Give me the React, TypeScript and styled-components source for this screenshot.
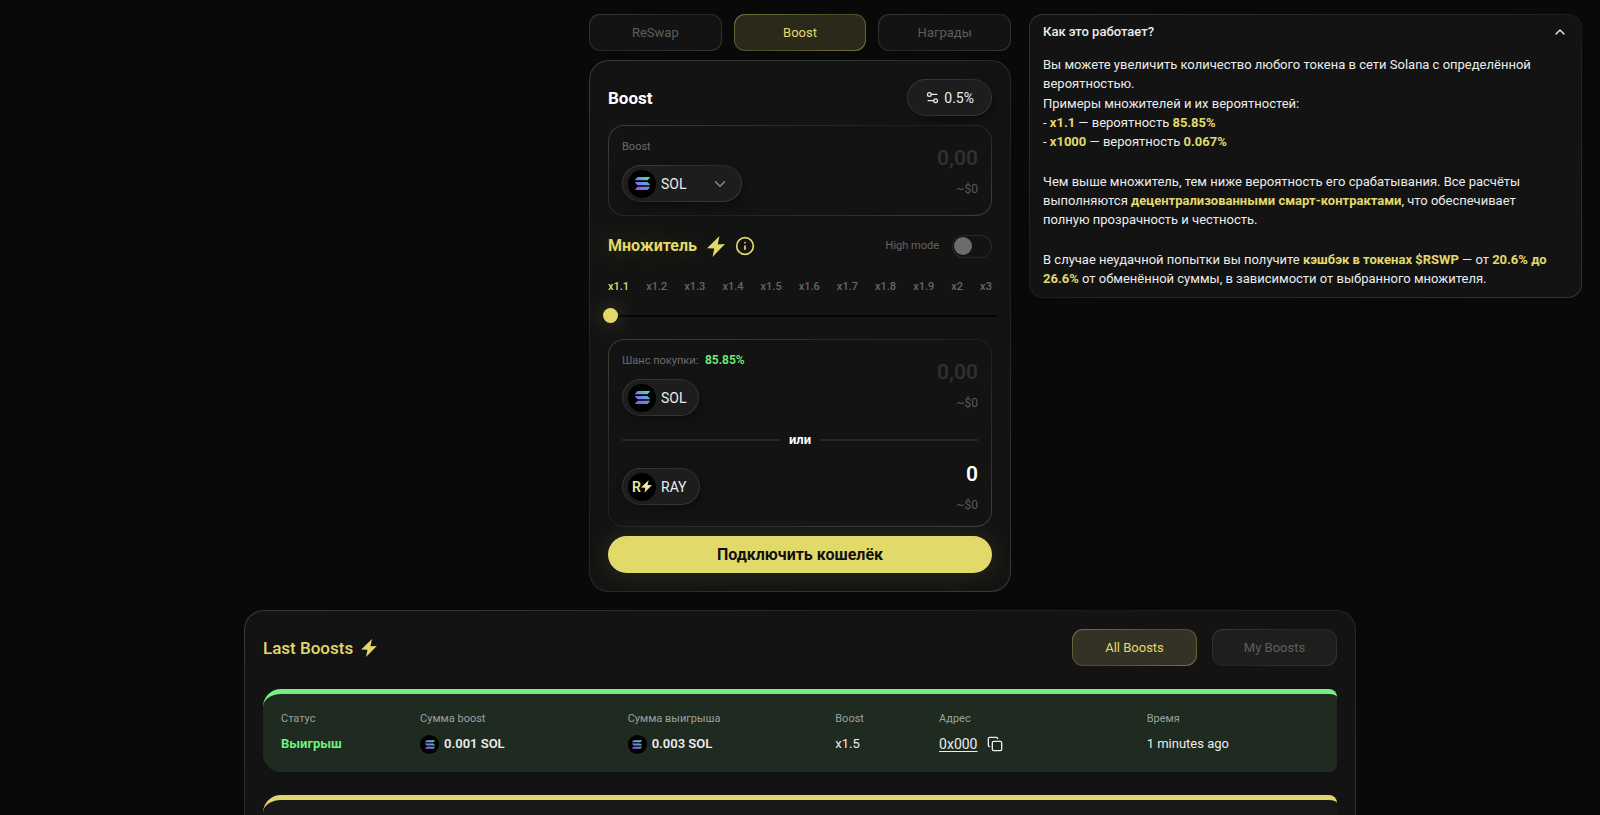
import React, { useId, useState } from "react";
import styled, { createGlobalStyle, css } from "styled-components";
import { ChevronDown, ChevronUp, Copy, Info, Settings2 } from "lucide-react";

const accent = "#e2d96b";
const green = "#6ff07c";

const GlobalStyle = createGlobalStyle`
  *, *::before, *::after { box-sizing: border-box; }
  body {
    margin: 0;
    background: #090909;
    color: #ececec;
    font-family: Roboto, Inter, sans-serif;
    font-size: 13px;
    line-height: 20px;
  }
  h1, h2, p { margin: 0; }
  button, input { font: inherit; color: inherit; }
`;

/* Panel surface with an edge that is lit at two opposite corners */
const litEdge = (fill: string, light: string, dark: string) => css`
  border: 1px solid transparent;
  background:
    linear-gradient(${fill}, ${fill}) padding-box,
    linear-gradient(155deg, ${light}, ${dark} 50%, ${light}) border-box;
`;

const Page = styled.main`
  height: 100vh;
  overflow: hidden;
  padding: 14px 18px 0;
`;

const Columns = styled.div`
  display: grid;
  grid-template-columns: minmax(0, 1fr) 422px minmax(0, 1fr);
  column-gap: 18px;
  align-items: start;
`;

const Center = styled.div`
  grid-column: 2;
  display: flex;
  flex-direction: column;
  gap: 9px;
`;

const Tabs = styled.nav`
  display: flex;
  gap: 12px;
`;

const Tab = styled.button<{ $active?: boolean; $raised?: boolean }>`
  flex: 1;
  height: 37px;
  padding: 0 12px;
  border-radius: 11px;
  cursor: pointer;
  color: ${(p) => (p.$active ? accent : "#5e5e5e")};
  ${(p) =>
    p.$active
      ? litEdge(p.$raised ? "#343224" : "#2a291a", "#77733a", "#4d4a26")
      : litEdge(p.$raised ? "#1e1e1e" : "#131313", "#373737", "#242424")}
`;

const Card = styled.section`
  padding: 18px;
  border-radius: 20px;
  ${litEdge("#131313", "#3a3a3a", "#1b1b1b")}
`;

const TitleRow = styled.div`
  display: flex;
  align-items: center;
  justify-content: space-between;
`;

const Title = styled.h1`
  font-size: 17px;
  font-weight: 700;
  color: #fff;
`;

const pill = css`
  display: inline-flex;
  align-items: center;
  height: 37px;
  border-radius: 19px;
  font-size: 14px;
  color: #ececec;
  cursor: pointer;
  box-shadow: 3px 5px 12px rgba(0, 0, 0, 0.3);
  ${litEdge("#1d1d1d", "#3c3c3c", "#2a2a2a")}
`;

const SlippageButton = styled.button`
  ${pill}
  gap: 4px;
  padding: 0 17px;
`;

const TokenPill = styled.button<{ $select?: boolean }>`
  ${pill}
  gap: 5px;
  padding: 0 12px 0 5px;
  width: ${(p) => (p.$select ? "120px" : "auto")};
  > svg { margin-left: auto; }
`;

const Coin = styled.span<{ $small?: boolean }>`
  flex: none;
  display: inline-flex;
  align-items: center;
  justify-content: center;
  width: ${(p) => (p.$small ? "19px" : "28px")};
  height: ${(p) => (p.$small ? "19px" : "28px")};
  border-radius: 50%;
  background: #000;
  color: #ece79b;
  font-size: 14px;
  font-weight: 600;
`;

const Box = styled.div`
  padding: 13px;
  border-radius: 16px;
  ${litEdge("#131313", "#3d3d3d", "#1f1f1f")}
`;

const FirstBox = styled(Box)`
  margin-top: 9px;
`;

const ChanceBox = styled(Box)`
  margin: 16px 0 9px;
`;

const AssetRow = styled.div`
  display: flex;
  align-items: center;
  justify-content: space-between;
`;

const Asset = styled.div`
  display: flex;
  flex-direction: column;
  align-items: flex-start;
  gap: 10px;
`;

const Caption = styled.label`
  font-size: 11px;
  line-height: 16px;
  color: #6b6b6b;
  strong {
    margin-left: 4px;
    font-size: 12px;
    line-height: 12px;
    font-weight: 600;
    color: ${green};
  }
`;

const Amount = styled.div`
  display: flex;
  flex-direction: column;
  align-items: flex-end;
  gap: 9px;
`;

const AmountInput = styled.input`
  width: 140px;
  height: 28px;
  padding: 0;
  border: 0;
  outline: 0;
  background: none;
  text-align: right;
  font-size: 21px;
  font-weight: 600;
  color: #fff;
  &::placeholder { color: #303030; opacity: 1; }
`;

const Fiat = styled.span`
  font-size: 12px;
  line-height: 16px;
  color: #5a5a5a;
`;

const Or = styled.div`
  display: flex;
  align-items: center;
  gap: 9px;
  margin: 15px 0 11px;
  line-height: 18px;
  font-weight: 700;
  color: #fff;
  &::before, &::after {
    content: "";
    flex: 1;
    height: 2px;
    background: #272727;
  }
`;

const MultiplierRow = styled.div`
  display: flex;
  align-items: center;
  justify-content: space-between;
  height: 24px;
  margin-top: 18px;
`;

const Heading = styled.h2<{ $light?: boolean }>`
  display: flex;
  align-items: center;
  gap: ${(p) => (p.$light ? "8px" : "10px")};
  font-size: ${(p) => (p.$light ? "17px" : "16px")};
  font-weight: ${(p) => (p.$light ? 500 : 700)};
  color: ${accent};
  text-shadow: ${(p) => (p.$light ? "none" : "0 0 24px rgba(226, 217, 107, 0.3)")};
`;

const ModeLabel = styled.label`
  display: flex;
  align-items: center;
  gap: 13px;
  font-size: 11px;
  color: #646464;
`;

const Switch = styled.input`
  appearance: none;
  display: flex;
  align-items: center;
  width: 40px;
  height: 23px;
  margin: 0;
  padding: 0 1px;
  border-radius: 12px;
  ${litEdge("#131313", "#1f1f1f", "#2b2b2b")}
  &::before {
    content: "";
    width: 18px;
    height: 18px;
    border-radius: 50%;
    background: #6c6c6c;
  }
  &:checked { justify-content: flex-end; }
  &:checked::before { background: ${accent}; }
`;

const Steps = styled.div`
  display: flex;
  justify-content: space-between;
  margin-top: 21px;
  font-size: 11px;
  line-height: 16px;
  font-weight: 500;
`;

const Step = styled.span<{ $active: boolean }>`
  color: ${(p) => (p.$active ? accent : "#666")};
`;

const Slider = styled.input`
  appearance: none;
  display: block;
  width: calc(100% + 10px);
  height: 15px;
  margin: 13px -5px 0;
  background: none;
  &::-webkit-slider-runnable-track {
    height: 2px;
    background: #050505;
  }
  &::-webkit-slider-thumb {
    appearance: none;
    width: 15px;
    height: 15px;
    margin-top: -7px;
    border-radius: 50%;
    background: ${accent};
    box-shadow: 0 0 20px rgba(226, 217, 107, 0.3);
  }
`;

const ConnectButton = styled.button`
  display: block;
  width: 100%;
  height: 37px;
  border: 0;
  border-radius: 19px;
  background: ${accent};
  color: #11110c;
  font-size: 16px;
  font-weight: 700;
  cursor: pointer;
  box-shadow: 0 0 24px rgba(226, 217, 107, 0.13);
`;

const Help = styled.section`
  padding: 7px 13px 9px;
  border-radius: 14px;
  ${litEdge("#131313", "#343434", "#1d1d1d")}
`;

const HelpToggle = styled.button`
  display: flex;
  align-items: center;
  justify-content: space-between;
  width: 100%;
  padding: 0;
  border: 0;
  background: none;
  font-weight: 500;
  cursor: pointer;
`;

const HelpText = styled.div`
  padding: 13px 11px 0 0;
  line-height: 19px;
  strong { font-weight: 700; color: ${accent}; }
  p + p { margin-top: 21px; }
  p + p.examples { margin-top: 1px; }
`;

const History = styled.section`
  max-width: 1112px;
  margin: 18px auto 0;
  padding: 18px;
  border-radius: 20px;
  ${litEdge("#131313", "#3a3a3a", "#1b1b1b")}
`;

const Filters = styled.div`
  display: flex;
  gap: 15px;
  width: 265px;
`;

const Record = styled.div<{ $tone: "win" | "pending" }>`
  min-height: 83px;
  margin-top: 23px;
  padding: 17px 18px 18px;
  border-top: 5px solid ${(p) => (p.$tone === "win" ? "#78ee7e" : "#e0d76c")};
  border-radius: 18px 8px 8px 18px;
  background: ${(p) => (p.$tone === "win" ? "#1f2a21" : "#181818")};
`;

const RecordTable = styled.table`
  width: 100%;
  table-layout: fixed;
  border-collapse: collapse;
  text-align: left;
  th {
    padding: 0 0 7px;
    font-size: 11px;
    line-height: 16px;
    font-weight: 400;
    color: #9aa29b;
  }
  td { padding: 0; }
`;

const Col = styled.col<{ $share: number }>`
  width: ${(p) => p.$share}%;
`;

const Cell = styled.span<{ $win?: boolean; $strong?: boolean }>`
  display: flex;
  align-items: center;
  gap: 5px;
  height: 20px;
  color: ${(p) => (p.$win ? green : "#ececec")};
  font-weight: ${(p) => (p.$win ? 700 : p.$strong ? 600 : 400)};
`;

const Address = styled.a`
  color: inherit;
  font-size: 14px;
  text-underline-offset: 2px;
`;

const IconButton = styled.button`
  display: inline-flex;
  padding: 0 5px;
  border: 0;
  background: none;
  cursor: pointer;
`;

function Bolt({ width = 18, pale = false }: { width?: number; pale?: boolean }) {
  return (
    <svg width={width} height={Math.round((width * 60) / 52)} viewBox="0 0 52 60" aria-hidden="true">
      <path d="M36 0 0 35l21 1-5 24 36-37-21 1z" fill={pale ? "#f0eba6" : accent} />
    </svg>
  );
}

function SolCoin({ small = false }: { small?: boolean }) {
  const id = useId();
  return (
    <Coin $small={small}>
      <svg width={small ? 10 : 15} height={small ? 9 : 13} viewBox="0 0 30 26" aria-hidden="true">
        <defs>
          <linearGradient id={id} gradientUnits="userSpaceOnUse" x1="3" y1="26" x2="27" y2="0">
            <stop offset="0" stopColor="#9352f0" />
            <stop offset="0.5" stopColor="#6d8be2" />
            <stop offset="1" stopColor="#4de3a8" />
          </linearGradient>
        </defs>
        <g fill={`url(#${id})`}>
          <path d="M6 0H29Q30.500 0 29.400 1.500L26 5.500Q25 6.500 24 6.500H1Q-.5 6.500 .6 5L4 1Q5 0 6 0z" />
          <path d="M1 9.750H24Q25 9.750 26 10.750L29.400 14.750Q30.500 16.250 29 16.250H6Q5 16.250 4 15.250L.6 11.250Q-.5 9.750 1 9.750z" />
          <path d="M6 19.500H29Q30.500 19.500 29.400 21L26 25Q25 26 24 26H1Q-.5 26 .6 24.500L4 20.500Q5 19.500 6 19.500z" />
        </g>
      </svg>
    </Coin>
  );
}

const steps = ["x1.1", "x1.2", "x1.3", "x1.4", "x1.5", "x1.6", "x1.7", "x1.8", "x1.9", "x2", "x3"];

const columns = [
  { name: "Статус", share: 13.4 },
  { name: "Сумма boost", share: 20 },
  { name: "Сумма выигрыша", share: 20 },
  { name: "Boost", share: 10 },
  { name: "Адрес", share: 20 },
  { name: "Время", share: 16.6 },
];

export default function App() {
  const [step, setStep] = useState(0);
  const [open, setOpen] = useState(true);

  return (
    <>
      <GlobalStyle />
      <Page>
        <Columns>
          <Center>
            <Tabs>
              <Tab>ReSwap</Tab>
              <Tab $active>Boost</Tab>
              <Tab>Награды</Tab>
            </Tabs>
            <Card>
              <TitleRow>
                <Title>Boost</Title>
                <SlippageButton>
                  <Settings2 size={15} />
                  0.5%
                </SlippageButton>
              </TitleRow>

              <FirstBox>
                <AssetRow>
                  <Asset>
                    <Caption htmlFor="stake">Boost</Caption>
                    <TokenPill $select>
                      <SolCoin />
                      SOL
                      <ChevronDown size={18} color="#8a8a8a" strokeWidth={2} />
                    </TokenPill>
                  </Asset>
                  <Amount>
                    <AmountInput id="stake" placeholder="0,00" />
                    <Fiat>~$0</Fiat>
                  </Amount>
                </AssetRow>
              </FirstBox>

              <MultiplierRow>
                <Heading>
                  Множитель
                  <Bolt />
                  <Info size={20} strokeWidth={2} />
                </Heading>
                <ModeLabel>
                  High mode
                  <Switch type="checkbox" />
                </ModeLabel>
              </MultiplierRow>

              <Steps>
                {steps.map((name, i) => (
                  <Step key={name} $active={i === step}>
                    {name}
                  </Step>
                ))}
              </Steps>
              <Slider
                type="range"
                aria-label="Множитель"
                min={0}
                max={steps.length - 1}
                value={step}
                onChange={(e) => setStep(Number(e.target.value))}
              />

              <ChanceBox>
                <AssetRow>
                  <Asset>
                    <Caption htmlFor="payout">
                      Шанс покупки: <strong>85.85%</strong>
                    </Caption>
                    <TokenPill>
                      <SolCoin />
                      SOL
                    </TokenPill>
                  </Asset>
                  <Amount>
                    <AmountInput id="payout" placeholder="0,00" />
                    <Fiat>~$0</Fiat>
                  </Amount>
                </AssetRow>
                <Or>или</Or>
                <AssetRow>
                  <TokenPill>
                    <Coin>
                      R<Bolt width={11} pale />
                    </Coin>
                    RAY
                  </TokenPill>
                  <Amount>
                    <AmountInput aria-label="RAY" defaultValue="0" />
                    <Fiat>~$0</Fiat>
                  </Amount>
                </AssetRow>
              </ChanceBox>

              <ConnectButton>Подключить кошелёк</ConnectButton>
            </Card>
          </Center>

          <Help>
            <HelpToggle aria-expanded={open} onClick={() => setOpen(!open)}>
              Как это работает?
              {open ? <ChevronUp size={16} /> : <ChevronDown size={16} />}
            </HelpToggle>
            {open && (
              <HelpText>
                <p>Вы можете увеличить количество любого токена в сети Solana с определённой вероятностью.</p>
                <p className="examples">
                  Примеры множителей и их вероятностей:
                  <br />- <strong>x1.1</strong> — вероятность <strong>85.85%</strong>
                  <br />- <strong>x1000</strong> — вероятность <strong>0.067%</strong>
                </p>
                <p>
                  Чем выше множитель, тем ниже вероятность его срабатывания. Все расчёты выполняются{" "}
                  <strong>децентрализованными смарт-контрактами</strong>, что обеспечивает полную прозрачность и
                  честность.
                </p>
                <p>
                  В случае неудачной попытки вы получите <strong>кэшбэк в токенах $RSWP</strong> — от{" "}
                  <strong>20.6% до 26.6%</strong> от обменённой суммы, в зависимости от выбранного множителя.
                </p>
              </HelpText>
            )}
          </Help>
        </Columns>

        <History>
          <TitleRow>
            <Heading $light>
              Last Boosts
              <Bolt width={16} />
            </Heading>
            <Filters>
              <Tab $active $raised>
                All Boosts
              </Tab>
              <Tab $raised>My Boosts</Tab>
            </Filters>
          </TitleRow>
          <Record $tone="win">
            <RecordTable>
              <colgroup>
                {columns.map((c) => (
                  <Col key={c.name} $share={c.share} />
                ))}
              </colgroup>
              <thead>
                <tr>
                  {columns.map((c) => (
                    <th key={c.name} scope="col">
                      {c.name}
                    </th>
                  ))}
                </tr>
              </thead>
              <tbody>
                <tr>
                  <td>
                    <Cell $win>Выигрыш</Cell>
                  </td>
                  <td>
                    <Cell $strong>
                      <SolCoin small />
                      0.001 SOL
                    </Cell>
                  </td>
                  <td>
                    <Cell $strong>
                      <SolCoin small />
                      0.003 SOL
                    </Cell>
                  </td>
                  <td>
                    <Cell>x1.5</Cell>
                  </td>
                  <td>
                    <Cell>
                      <Address href="#address">0x000</Address>
                      <IconButton aria-label="Copy">
                        <Copy size={16} />
                      </IconButton>
                    </Cell>
                  </td>
                  <td>
                    <Cell>1 minutes ago</Cell>
                  </td>
                </tr>
              </tbody>
            </RecordTable>
          </Record>
          <Record $tone="pending" />
        </History>
      </Page>
    </>
  );
}
